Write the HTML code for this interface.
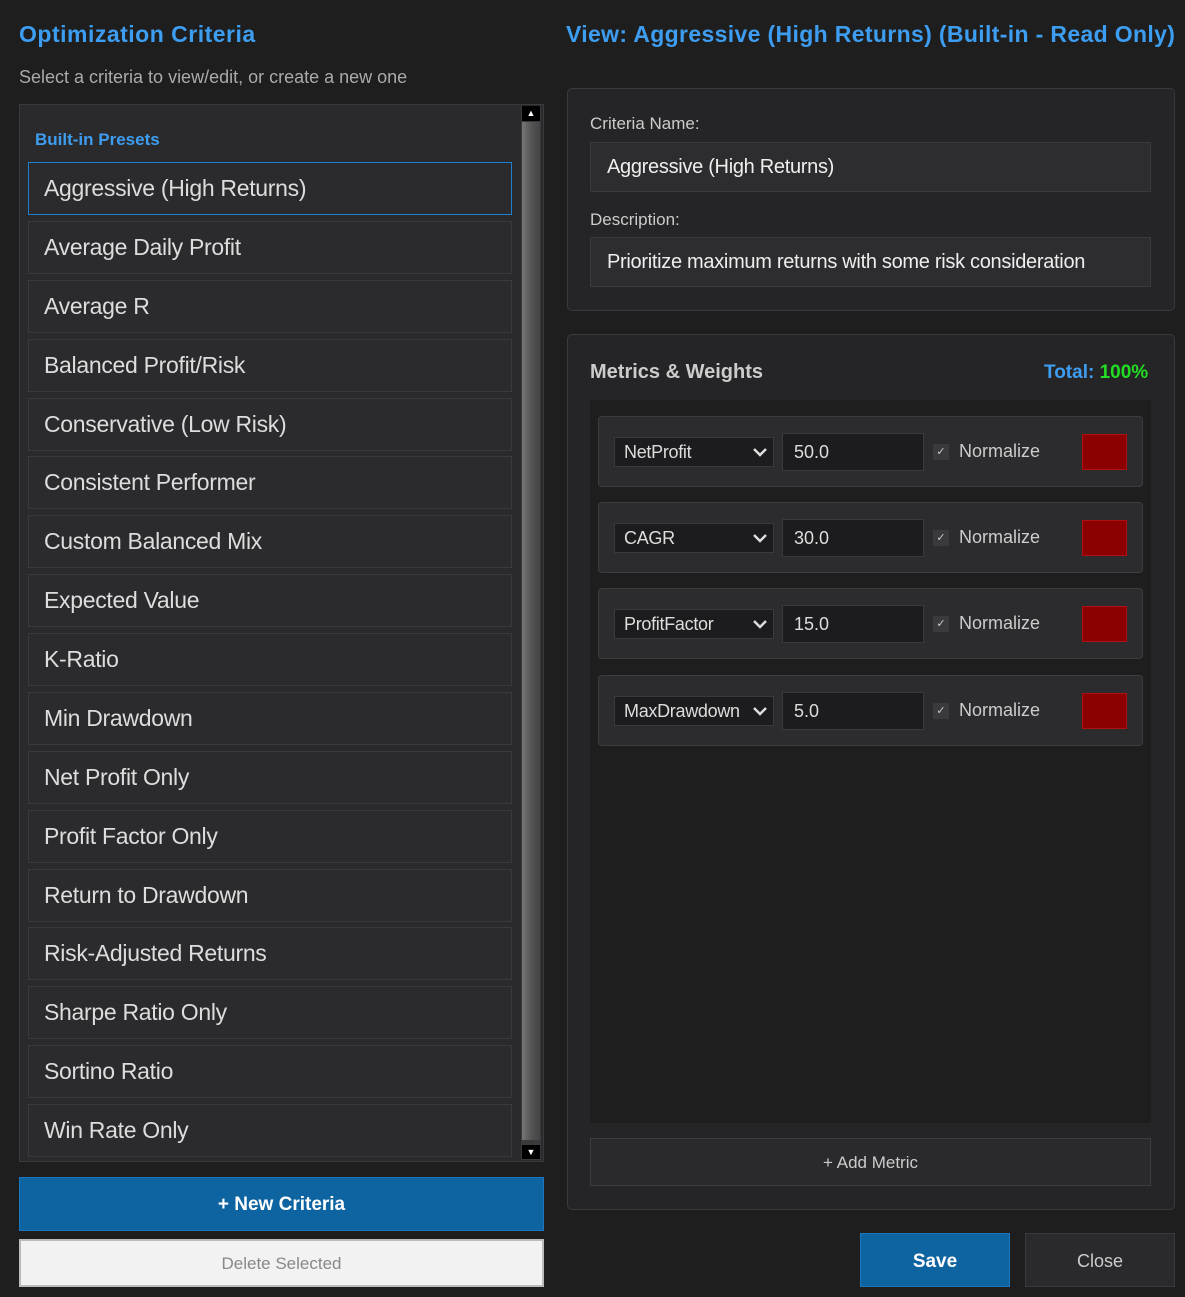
<!DOCTYPE html>
<html><head><style>
*{box-sizing:border-box;margin:0;padding:0}
body{width:1185px;height:1297px;background:#1e1e1f;font-family:"Liberation Sans",sans-serif;position:relative;overflow:hidden;color:#ddd}
.a{position:absolute;white-space:nowrap}
.h{color:#3d9df0;font-weight:bold;font-size:23px;letter-spacing:0.5px}
.item{position:absolute;left:28px;width:484px;height:53px;background:#2b2b2e;border:1px solid #3a3a3e;font-size:23px;letter-spacing:-0.3px;color:#ddd;padding-left:15px;line-height:51px}
.panel{position:absolute;background:#252527;border:1px solid #3a3a3e;border-radius:5px}
.inp{position:absolute;left:590px;width:561px;height:50px;background:#2d2d30;border:1px solid #3a3a3e;font-size:20px;letter-spacing:-0.3px;color:#eee;padding-left:16px;line-height:48px}
.lbl{position:absolute;left:590px;font-size:17px;color:#ccc}
.row{position:absolute;left:598px;width:545px;height:71px;background:#2c2c2f;border:1px solid #3d3d41;border-radius:4px}
.sel{position:absolute;left:15px;top:20px;width:160px;height:30px;background:#1c1c1e;border:1px solid #3a3a3e;font-size:18px;letter-spacing:-0.3px;color:#ddd;padding-left:9px;line-height:28px}
.sel svg{position:absolute;right:6px;top:9px}
.num{position:absolute;left:183px;top:16px;width:142px;height:38px;background:#1c1c1e;border:1px solid #3a3a3e;font-size:18px;color:#ddd;padding-left:11px;line-height:36px}
.cb{position:absolute;left:334px;top:27px;width:16px;height:16px;background:#3a3a3e;color:#ccc;font-size:11px;text-align:center;line-height:16px}
.nl{position:absolute;left:360px;top:24px;font-size:18px;color:#ccc}
.sw{position:absolute;left:483px;top:17px;width:45px;height:36px;background:#8b0000;border:1px solid #b01010}
</style></head><body>
<div class="a h" style="left:19px;top:21px">Optimization Criteria</div>
<div class="a" style="left:19px;top:67px;font-size:18px;color:#aaa">Select a criteria to view/edit, or create a new one</div>
<div class="a" style="left:19px;top:104px;width:525px;height:1058px;background:#2a2a2d;border:1px solid #3a3a3e"></div>
<div class="a" style="left:35px;top:130px;font-size:17px;font-weight:bold;color:#3d9df0">Built-in Presets</div>
<div class="item" style="top:162px;border-color:#1e7fd0;">Aggressive (High Returns)</div>
<div class="item" style="top:221px">Average Daily Profit</div>
<div class="item" style="top:280px">Average R</div>
<div class="item" style="top:339px">Balanced Profit/Risk</div>
<div class="item" style="top:398px">Conservative (Low Risk)</div>
<div class="item" style="top:456px">Consistent Performer</div>
<div class="item" style="top:515px">Custom Balanced Mix</div>
<div class="item" style="top:574px">Expected Value</div>
<div class="item" style="top:633px">K-Ratio</div>
<div class="item" style="top:692px">Min Drawdown</div>
<div class="item" style="top:751px">Net Profit Only</div>
<div class="item" style="top:810px">Profit Factor Only</div>
<div class="item" style="top:869px">Return to Drawdown</div>
<div class="item" style="top:927px">Risk-Adjusted Returns</div>
<div class="item" style="top:986px">Sharpe Ratio Only</div>
<div class="item" style="top:1045px">Sortino Ratio</div>
<div class="item" style="top:1104px">Win Rate Only</div>
<div class="a" style="left:521px;top:106px;width:20px;height:1054px;background:#3a3a3c"></div>
<div class="a" style="left:522px;top:122px;width:18px;height:1018px;background:linear-gradient(90deg,#777,#555,#444)"></div>
<div class="a" style="left:522px;top:106px;width:18px;height:15px;background:#000;color:#fff;font-size:9px;text-align:center;line-height:15px">▲</div>
<div class="a" style="left:522px;top:1145px;width:18px;height:14px;background:#000;color:#fff;font-size:9px;text-align:center;line-height:14px">▼</div>
<div class="a" style="left:19px;top:1177px;width:525px;height:54px;background:#0e64a0;border:1px solid #1a78c0;color:#fff;font-size:19px;font-weight:bold;text-align:center;line-height:54px">+ New Criteria</div>
<div class="a" style="left:19px;top:1239px;width:525px;height:48px;background:#f2f2f2;border:2px solid #bbb;color:#888;font-size:17px;text-align:center;line-height:46px">Delete Selected</div>

<div class="a h" style="left:566px;top:21px;font-size:23px;letter-spacing:0.35px">View: Aggressive (High Returns) (Built-in - Read Only)</div>
<div class="panel" style="left:567px;top:88px;width:608px;height:223px"></div>
<div class="lbl" style="top:114px">Criteria Name:</div>
<div class="inp" style="top:142px">Aggressive (High Returns)</div>
<div class="lbl" style="top:210px">Description:</div>
<div class="inp" style="top:237px">Prioritize maximum returns with some risk consideration</div>

<div class="panel" style="left:567px;top:334px;width:608px;height:876px"></div>
<div class="a" style="left:590px;top:361px;font-size:20px;font-weight:bold;color:#ccc">Metrics &amp; Weights</div>
<div class="a" style="left:1044px;top:362px;font-size:19px;font-weight:bold;color:#3d9df0">Total: <span style="color:#22dd22">100%</span></div>
<div class="a" style="left:590px;top:400px;width:561px;height:723px;background:#1e1e1f"></div>
<div class="row" style="top:416px"><div class="sel">NetProfit<svg width="14" height="10"><path d="M1 2l6 6 6-6" stroke="#ddd" stroke-width="2.5" fill="none"/></svg></div><div class="num">50.0</div><div class="cb">✓</div><div class="nl">Normalize</div><div class="sw"></div></div>
<div class="row" style="top:502px"><div class="sel">CAGR<svg width="14" height="10"><path d="M1 2l6 6 6-6" stroke="#ddd" stroke-width="2.5" fill="none"/></svg></div><div class="num">30.0</div><div class="cb">✓</div><div class="nl">Normalize</div><div class="sw"></div></div>
<div class="row" style="top:588px"><div class="sel">ProfitFactor<svg width="14" height="10"><path d="M1 2l6 6 6-6" stroke="#ddd" stroke-width="2.5" fill="none"/></svg></div><div class="num">15.0</div><div class="cb">✓</div><div class="nl">Normalize</div><div class="sw"></div></div>
<div class="row" style="top:675px"><div class="sel">MaxDrawdown<svg width="14" height="10"><path d="M1 2l6 6 6-6" stroke="#ddd" stroke-width="2.5" fill="none"/></svg></div><div class="num">5.0</div><div class="cb">✓</div><div class="nl">Normalize</div><div class="sw"></div></div>
<div class="a" style="left:590px;top:1138px;width:561px;height:48px;background:#2a2a2d;border:1px solid #3d3d41;font-size:17px;color:#ccc;text-align:center;line-height:48px">+ Add Metric</div>
<div class="a" style="left:860px;top:1233px;width:150px;height:54px;background:#0e64a0;border:1px solid #1a78c0;color:#fff;font-size:19px;font-weight:bold;text-align:center;line-height:55px">Save</div>
<div class="a" style="left:1025px;top:1233px;width:150px;height:54px;background:#2a2a2d;border:1px solid #3a3a3e;color:#ccc;font-size:18px;text-align:center;line-height:54px">Close</div>
</body></html>
